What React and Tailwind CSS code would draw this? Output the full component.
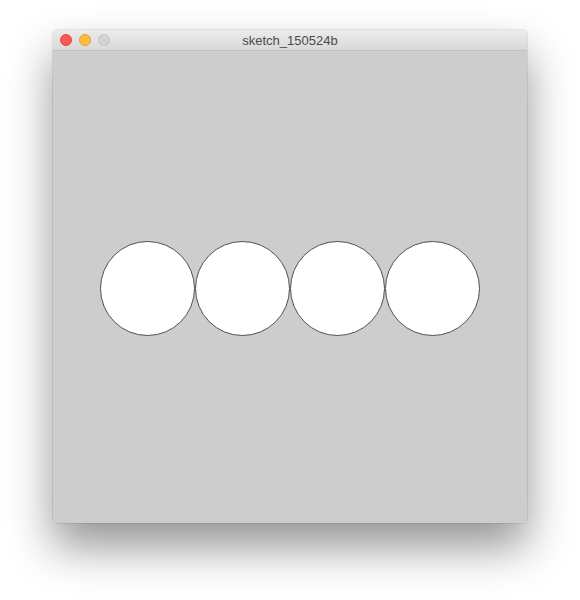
import React from 'react';

// Processing sketch window: four tangent circles on the default grey canvas.
const TrafficLights = () => (
  <div className="flex items-center gap-[7px] pl-[7px]">
    <span className="w-[12px] h-[12px] rounded-full bg-[#fc5753] border border-[#df4744]" />
    <span className="w-[12px] h-[12px] rounded-full bg-[#fdbc40] border border-[#de9f34]" />
    <span className="w-[12px] h-[12px] rounded-full bg-[#d3d3d3] border border-[#c4c4c4]" />
  </div>
);

const App = () => {
  const circles = [0, 1, 2, 3];

  return (
    <div className="w-[580px] h-[600px] bg-white pt-[30px] pl-[53px]">
      <div className="w-[474px] h-[493px] flex flex-col rounded-[4px] overflow-hidden shadow-[0_0_0_1px_rgba(0,0,0,0.08),0_24px_45px_rgba(0,0,0,0.42)]">
        <header className="relative h-[21px] shrink-0 flex items-center bg-gradient-to-b from-[#ececec] to-[#d9d9d9] border-b border-[#c2c2c2]">
          <TrafficLights />
          <span
            className="absolute inset-x-0 text-center text-[13px] leading-none text-[#4a4a4a]"
            style={{ fontFamily: '"Liberation Sans", Arial, sans-serif' }}
          >
            sketch_150524b
          </span>
        </header>

        <main className="flex-1 bg-[#cdcdcd] flex items-center justify-center pt-[2px]">
          {circles.map((i) => (
            <div
              key={i}
              className="w-[95px] h-[95px] rounded-full bg-white border border-[#4f4f4f]"
            />
          ))}
        </main>
      </div>
    </div>
  );
};

export default App;
